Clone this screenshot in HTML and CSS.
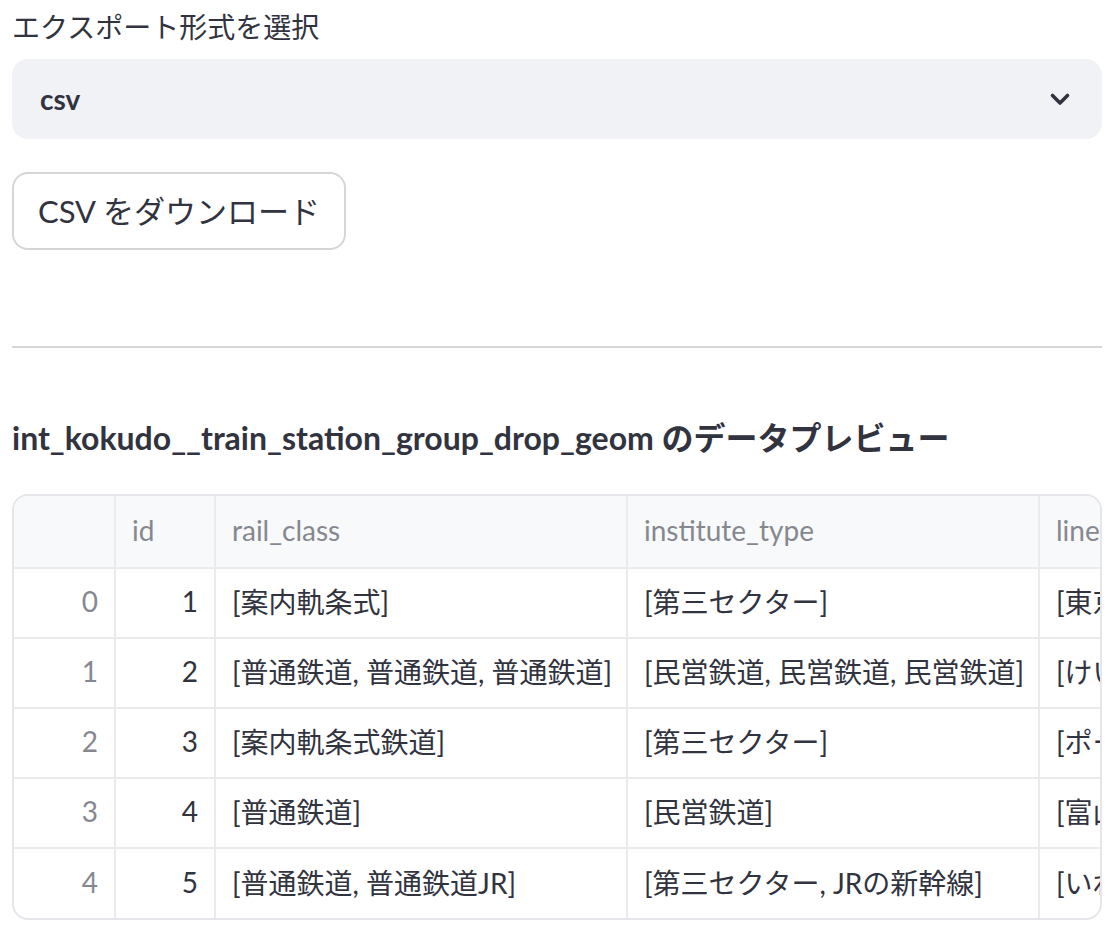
FILE: index.html
```html
<!DOCTYPE html>
<html lang="ja">
<head>
<meta charset="utf-8">
<title>Export</title>
<link rel="stylesheet" href="styles.css">
</head>
<body>
<main class="page">
  <div class="field">
    <label class="label">エクスポート形式を選択</label>
    <div class="select">
      <span class="select-value">csv</span>
      <svg class="chevron" width="24" height="24" viewBox="0 0 24 24"><path d="M4.5 8.5 L12 16 L19.5 8.5" fill="none" stroke="#31333f" stroke-width="3.6" stroke-linecap="round" stroke-linejoin="round"/></svg>
    </div>
  </div>
  <button class="btn">CSV をダウンロード</button>
  <hr class="divider">
  <p class="heading">int_kokudo__train_station_group_drop_geom のデータプレビュー</p>
  <div class="grid-wrap">
    <table class="grid">
      <colgroup>
        <col class="c-idx"><col class="c-id"><col class="c-wide"><col class="c-wide"><col class="c-rest">
      </colgroup>
      <thead>
        <tr><th></th><th>id</th><th>rail_class</th><th>institute_type</th><th>line_name</th></tr>
      </thead>
      <tbody>
        <tr><td class="idx">0</td><td class="num">1</td><td>[案内軌条式]</td><td>[第三セクター]</td><td>[東京臨海新交通臨海線]</td></tr>
        <tr><td class="idx">1</td><td class="num">2</td><td>[普通鉄道, 普通鉄道, 普通鉄道]</td><td>[民営鉄道, 民営鉄道, 民営鉄道]</td><td>[けいはんな線, 中央線, 奈良線]</td></tr>
        <tr><td class="idx">2</td><td class="num">3</td><td>[案内軌条式鉄道]</td><td>[第三セクター]</td><td>[ポートアイランド線]</td></tr>
        <tr><td class="idx">3</td><td class="num">4</td><td>[普通鉄道]</td><td>[民営鉄道]</td><td>[富山港線]</td></tr>
        <tr><td class="idx">4</td><td class="num">5</td><td>[普通鉄道, 普通鉄道JR]</td><td>[第三セクター, JRの新幹線]</td><td>[いわて銀河鉄道線, 東北新幹線]</td></tr>
      </tbody>
    </table>
  </div>
</main>
</body>
</html>
```

FILE: styles.css
```css
* { box-sizing: border-box; }
html, body { margin: 0; padding: 0; background: #ffffff; }
body {
  font-family: Lato, "Noto Sans CJK JP", sans-serif;
  color: #31333f;
}
.page {
  padding: 0 8px 0 12px;
  width: 1110px;
}
.field { display: flex; flex-direction: column; }
.label {
  font-family: "Noto Sans CJK JP", sans-serif;
  font-size: 28px;
  line-height: 52px;
  margin-bottom: 7px;
  color: #31333f;
}
.select {
  height: 80px;
  background: #f0f2f6;
  border-radius: 16px;
  display: flex;
  align-items: center;
  justify-content: space-between;
  padding: 0 30px 0 28px;
}
.select-value {
  font-size: 28px;
  font-weight: 700;
}
.chevron { display: block; }
.btn {
  margin-top: 33px;
  height: 78px;
  padding: 0 24px;
  border: 2px solid #d6d6d9;
  border-radius: 16px;
  background: #ffffff;
  color: #31333f;
  font-family: inherit;
  font-size: 31px;
  line-height: 1;
  display: flex;
  align-items: center;
}
.divider {
  margin: 96px 0 0 0;
  border: 0;
  height: 2px;
  background: #d6d6d9;
}
.heading {
  margin: 66px 0 0 0;
  font-size: 32px;
  line-height: 48px;
  font-weight: 700;
}
.grid-wrap {
  margin-top: 32px;
  width: 1090px;
  border: 2px solid #e6e6ea;
  border-radius: 16px;
  overflow: hidden;
}
.grid {
  border-collapse: collapse;
  table-layout: fixed;
  width: 1600px;
  font-size: 28px;
}
.c-idx { width: 101px; }
.c-id { width: 100px; }
.c-wide { width: 412px; }
.c-rest { width: 575px; }
.grid th, .grid td {
  border-right: 2px solid #ebebee;
  border-bottom: 2px solid #ebebee;
  padding: 0 16px 4px 16px;
  white-space: nowrap;
  overflow: hidden;
  text-align: left;
  font-weight: 400;
}
.grid th {
  height: 72px;
  background: #f8f9fb;
  color: #86888f;
}
.grid td { height: 70px; }
.grid tbody tr:last-child td { border-bottom: 0; }
.grid td.idx { text-align: right; color: #86888f; }
.grid td.num { text-align: right; }
```
